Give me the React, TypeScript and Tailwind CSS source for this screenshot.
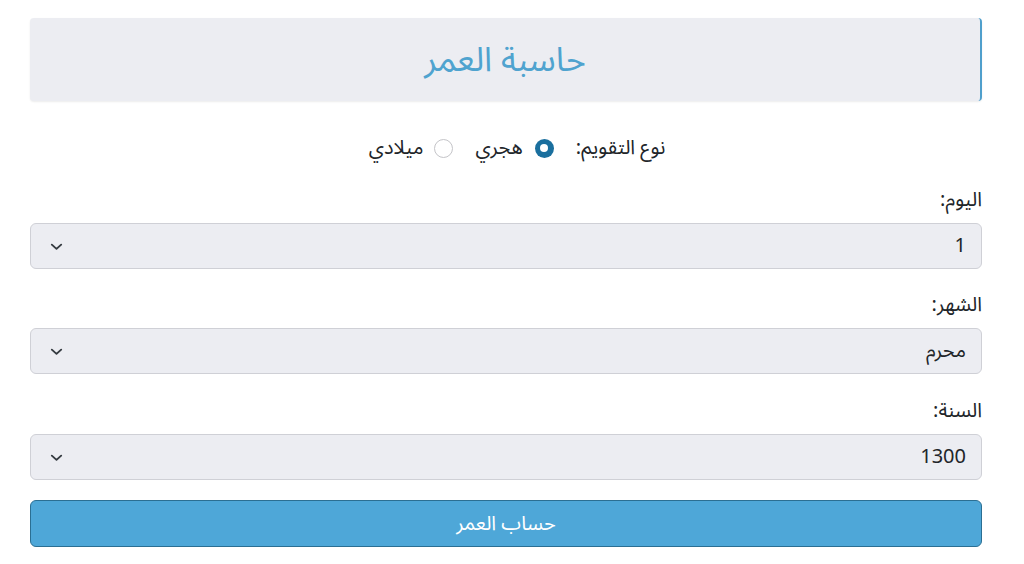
import React from "react";

const font = { fontFamily: '"Noto Sans Arabic", "Noto Sans", "DejaVu Sans", sans-serif' };

function Chevron() {
  return (
    <svg width="15" height="15" viewBox="0 0 16 16" fill="none">
      <path d="M3 6l5 4.5L13 6" stroke="#343a40" strokeWidth="2" strokeLinecap="round" strokeLinejoin="round" />
    </svg>
  );
}

function Select({ value }: { value: string }) {
  return (
    <div className="flex h-[46px] items-center justify-between rounded-[6px] border border-[#cfd0d6] bg-[#ecedf2] pl-[18px] pr-[15px] text-[20px] text-[#212529]">
      <span>{value}</span>
      <Chevron />
    </div>
  );
}

function Field({ label, value, className }: { label: string; value: string; className?: string }) {
  return (
    <div className={"flex flex-col " + (className ?? "")}>
      <label className="mb-[9px] h-[28px] text-[20px] leading-[28px] text-[#212529]">{label}</label>
      <Select value={value} />
    </div>
  );
}

export default function App() {
  return (
    <div dir="rtl" style={font} className="min-h-[564px] w-[1024px] bg-white pl-[30px] pr-[42px] pt-[18px]">
      <div className="flex h-[83px] items-center justify-center rounded-[4px] border-r-2 border-[#4f9fcc] bg-[#ecedf2] shadow-[0_1px_2px_rgba(0,0,0,0.08)]">
        <h1 className="text-[34px] font-normal leading-[40px] text-[#4fa3cf]">حاسبة العمر</h1>
      </div>

      <div className="mt-[33px] flex h-[28px] items-center justify-center pl-[22px] text-[20px] leading-[28px] text-[#212529]">
        <span className="tracking-[0.3px]">نوع التقويم:</span>
        <span className="mr-[22px] flex h-[19px] w-[19px] items-center justify-center rounded-full bg-[#1a6f9e]">
          <span className="h-[8px] w-[8px] rounded-full bg-white"></span>
        </span>
        <span className="mr-[12px]">هجري</span>
        <span className="mr-[22px] h-[19px] w-[19px] rounded-full border border-[#c4c4c8] bg-white"></span>
        <span className="mr-[11px]">ميلادي</span>
      </div>

      <div className="mt-[24px] flex flex-col">
        <Field label="اليوم:" value="1" />
        <Field label="الشهر:" value="محرم" className="mt-[22px]" />
        <Field label="السنة:" value="1300" className="mt-[23px]" />
      </div>

      <button className="mt-[20px] flex h-[47px] w-full items-center justify-center rounded-[6px] border border-[#2b6f93] bg-[#4ea7d8] text-[20px] text-white">
        حساب العمر
      </button>
    </div>
  );
}
